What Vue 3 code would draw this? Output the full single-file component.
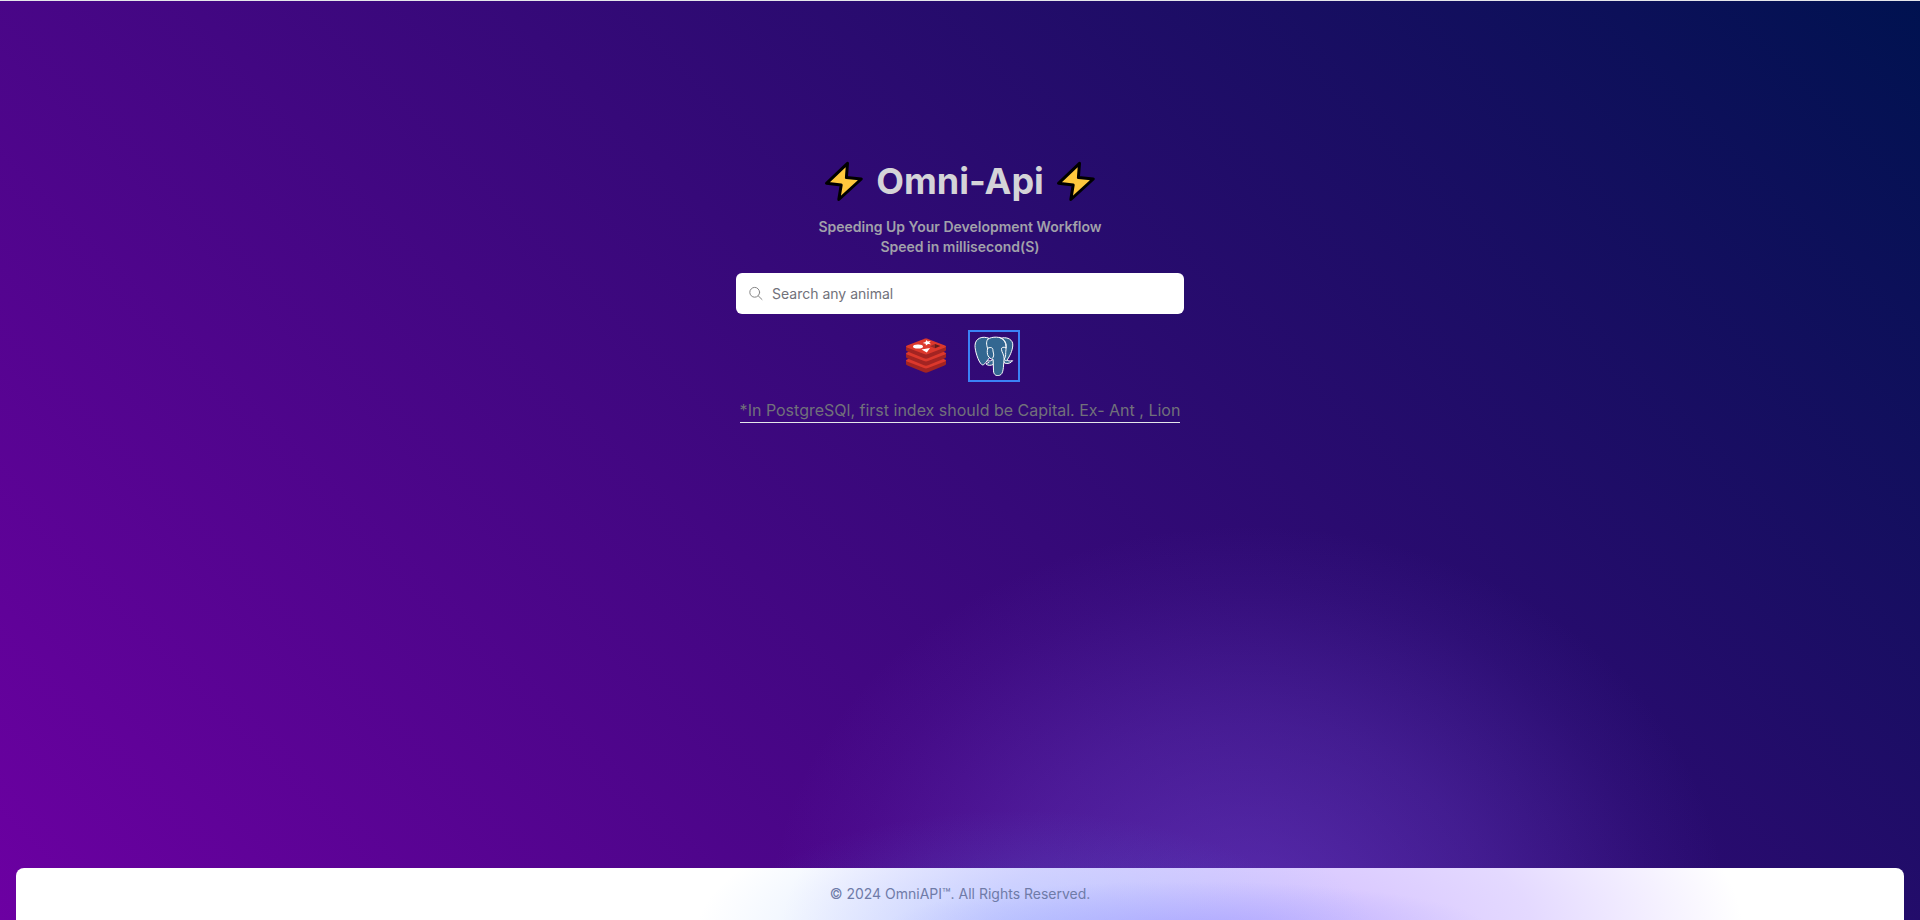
<script setup>
import { ref } from 'vue'

const query = ref('')
const source = ref('postgres')
</script>

<template>
  <div class="page">
    <main class="hero">
      <h1 class="title">
        <svg class="bolt" viewBox="0 0 40 44" aria-hidden="true">
          <path d="M23.500 4.300 2.500 24.300 17.200 26 14.800 40.500 37.300 20 22.400 18.500Z" />
        </svg>
        <span>Omni-Api</span>
        <svg class="bolt" viewBox="0 0 40 44" aria-hidden="true">
          <path d="M23.500 4.300 2.500 24.300 17.200 26 14.800 40.500 37.300 20 22.400 18.500Z" />
        </svg>
      </h1>
      <p class="tagline">Speeding Up Your Development Workflow<br />Speed in millisecond(S)</p>

      <label class="search">
        <svg class="search-icon" viewBox="0 0 16 16" aria-hidden="true">
          <circle cx="6.700" cy="6.300" r="4.900" />
          <path d="m10.300 9.900 3.700 3.600" />
        </svg>
        <input v-model="query" type="text" placeholder="Search any animal" aria-label="Search any animal" />
      </label>

      <div class="sources">
        <button type="button" class="source" :class="{ active: source === 'redis' }" aria-label="Redis" @click="source = 'redis'">
          <svg viewBox="0 0 40 40">
            <g v-for="y in [14, 7, 0]" :key="y" :transform="`translate(0 ${y})`">
              <path fill="#a32422" d="M0 10.500V14c0 .7.700 1 1.500 1.400L18 22.300c1.300.600 2.700.600 4 0l16.500-6.900c.800-.4 1.500-.7 1.500-1.400v-3.500Z" />
              <path fill="#dc382c" d="M1 9.600 18 2.900c1.300-.6 2.700-.6 4 0L39 9.600c1.300.600 1.300 1.200 0 1.800L22 18c-1.300.6-2.700.6-4 0L1 11.400c-1.300-.6-1.300-1.200 0-1.800Z" />
            </g>
            <ellipse cx="12" cy="10.500" rx="5" ry="2" fill="#fff" />
            <path fill="#fff" d="m20.500 4 1.200 1.600 3-.5-1.500 1.700 1.900 1.400-3.100-.1-2.100 1.500-.2-1.900-3-.7 2.800-.9ZM15.500 13.500l8.500-1.500-3.200 4.500Z" />
            <path fill="#621b1c" d="m29 8 5.500 2.100-5.500 2.200Z" />
            <path fill="#9a2928" d="m24 10.200 5-2.200v4.300Z" />
          </svg>
        </button>
        <button type="button" class="source" :class="{ active: source === 'postgres' }" aria-label="PostgreSQL" @click="source = 'postgres'">
          <svg viewBox="0 0 40 40">
            <g fill="#336791" stroke="#fff" stroke-width="1" stroke-linejoin="round" stroke-linecap="round">
              <path d="M27 2.200c4.500-1.500 10.500.300 11.600 5 .9 4.700-2 11.700-5.400 16.700.4 1.300 2.500 1.200 5.400.8-1.600 2.500-5 3.300-8 2.400L25 15Z" />
              <path d="M15 2.300C8.500-.4 1.300 2 1 9.500c-.1 5 3.200 16.200 6.700 19 1.500 1.200 3-.6 5-3.100l3-4Z" />
              <path d="M12.500 25.300c1.500-1 2.500-.2 4-.5l3-1.500v5c-2.500 1.400-5.500 1.500-7.500-.3-.5-.9 1.500-.4 3-1.600" />
              <path d="M14 3.100c3.500-2.800 13.500-3 16.500 1.500 3 4.300 1.300 8.300 1.200 12-.1 3 .2 4.300-1.600 6.700-.9 8-.4 14.700-4.500 16-3.500 1-5.900-.6-6.100-4.400l-.4-11.500c-5-1-6.600-5-5.500-10.800-1.300-4.400-1.600-7.600.4-9.500Z" />
              <path fill="none" d="M13.400 12.500c2-1.700 5.500-1.300 5.500 1.200 0 3.400 2 5-.2 8.300M31.500 11.700c-1.700-1.200-4.500-.5-4 1.900.4 3.300 2.700 4.600 2.700 9.700 1 1.200 2 1.600 3 1.300M25.500 1.400c5 2.400 7 6 6.300 10.500" />
            </g>
          </svg>
        </button>
      </div>

      <p class="note">*In PostgreSQl, first index should be Capital. Ex- Ant , Lion</p>
    </main>

    <footer class="footer">© 2024 OmniAPI™. All Rights Reserved.</footer>
  </div>
</template>

<style>
body {
  margin: 0;
}
</style>

<style scoped>
.page {
  box-sizing: border-box;
  min-height: 100vh;
  display: flex;
  flex-direction: column;
  border-top: 1px solid #e5e7eb;
  font-family: Inter, "Liberation Sans", sans-serif;
  background:
    radial-gradient(ellipse 16% 15% at 53% 103%, rgba(90, 120, 220, 0.28), transparent),
    radial-gradient(ellipse 25% 43% at 65% 100%, rgba(125, 90, 235, 0.43), rgba(125, 90, 235, 0.23) 50%, rgba(125, 90, 235, 0.06) 84%, transparent),
    linear-gradient(45deg, #6c00a2, #001250);
}

.hero {
  flex: 1;
  display: flex;
  flex-direction: column;
  align-items: center;
  padding: 158px 16px 32px;
}

.title {
  display: flex;
  align-items: center;
  gap: 12px;
  margin: 0;
  color: #d4d4d8;
  font-size: 36px;
  font-weight: 700;
  line-height: 40px;
}

.bolt {
  width: 40px;
  height: 44px;
}

.bolt path {
  fill: #ffc83d;
  stroke: #000;
  stroke-width: 3;
  stroke-linejoin: round;
}

.tagline {
  margin: 14px 0 16px;
  color: #a1a1aa;
  font-size: 14px;
  font-weight: 600;
  line-height: 20px;
  text-align: center;
}

.search {
  box-sizing: border-box;
  display: flex;
  align-items: center;
  gap: 8px;
  width: 100%;
  max-width: 448px;
  padding: 0 12px;
  border-radius: 6px;
  background: #fff;
}

.search-icon {
  width: 16px;
  height: 16px;
  fill: none;
  stroke: #858585;
  stroke-linecap: round;
}

.search input {
  flex: 1;
  min-width: 0;
  height: 41px;
  padding: 0;
  border: 0;
  outline: 0;
  background: transparent;
  color: #18181b;
  font: 14px/20px Inter, "Liberation Sans", sans-serif;
}

.search input::placeholder {
  color: #71717a;
  opacity: 1;
}

.sources {
  display: flex;
  gap: 16px;
  margin: 16px 0;
}

.source {
  padding: 4px;
  border: 2px solid transparent;
  background: none;
  cursor: pointer;
}

.source.active {
  border-color: #3b82f6;
}

.source svg {
  display: block;
  width: 40px;
  height: 40px;
}

.note {
  margin: 0;
  border-bottom: 1px solid #e5e7eb;
  color: #71717a;
  font-size: 16px;
  font-weight: 400;
  line-height: 24px;
}

.footer {
  margin: 0 16px;
  padding: 16px;
  border-radius: 8px 8px 0 0;
  color: #6f7ba8;
  font-size: 14px;
  line-height: 20px;
  text-align: center;
  background:
    radial-gradient(ellipse 16% 90% at 62% 115%, rgba(150, 145, 255, 0.45), transparent),
    radial-gradient(ellipse 18% 260% at 54% 130%, rgba(150, 190, 255, 0.48), transparent),
    radial-gradient(ellipse 26% 420% at 66% 120%, rgba(180, 145, 255, 0.6), rgba(180, 150, 255, 0.36) 55%, transparent 98%),
    #fff;
}
</style>
